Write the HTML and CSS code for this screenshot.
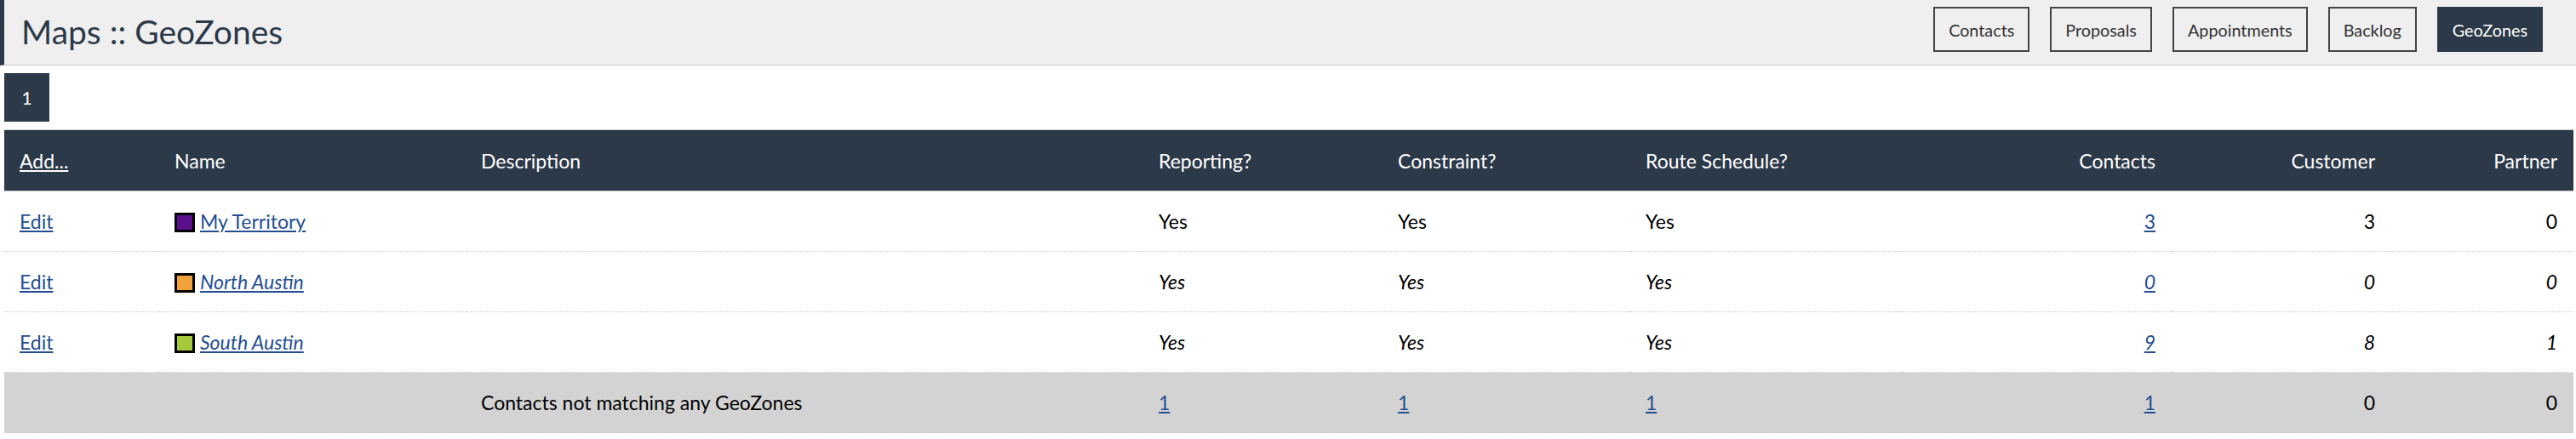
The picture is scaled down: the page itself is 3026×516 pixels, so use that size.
FILE: index.html
```html
<!DOCTYPE html>
<html lang="en">
<head>
<meta charset="utf-8">
<title>Maps :: GeoZones</title>
<link rel="stylesheet" href="styles.css">
</head>
<body>
<header class="topbar">
  <h1 class="title">Maps :: GeoZones</h1>
  <nav class="nav">
    <a class="nav-btn" href="#">Contacts</a>
    <a class="nav-btn" href="#">Proposals</a>
    <a class="nav-btn" href="#">Appointments</a>
    <a class="nav-btn" href="#">Backlog</a>
    <a class="nav-btn active" href="#">GeoZones</a>
  </nav>
</header>
<main class="content">
  <div class="pager"><span class="page">1</span></div>
  <table class="grid">
    <colgroup>
      <col class="c-edit"><col class="c-name"><col class="c-desc"><col class="c-rep"><col class="c-con"><col class="c-route"><col class="c-contacts"><col class="c-cust"><col class="c-part">
    </colgroup>
    <thead>
      <tr>
        <th><a href="#" class="head-link">Add...</a></th>
        <th>Name</th>
        <th>Description</th>
        <th>Reporting?</th>
        <th>Constraint?</th>
        <th>Route Schedule?</th>
        <th class="num">Contacts</th>
        <th class="num">Customer</th>
        <th class="num">Partner</th>
      </tr>
    </thead>
    <tbody>
      <tr>
        <td><a href="#">Edit</a></td>
        <td><span class="swatch purple"></span><a href="#">My Territory</a></td>
        <td></td>
        <td>Yes</td>
        <td>Yes</td>
        <td>Yes</td>
        <td class="num"><a href="#">3</a></td>
        <td class="num">3</td>
        <td class="num">0</td>
      </tr>
      <tr class="inactive">
        <td><a href="#" class="plain">Edit</a></td>
        <td><span class="swatch orange"></span><a href="#">North Austin</a></td>
        <td></td>
        <td>Yes</td>
        <td>Yes</td>
        <td>Yes</td>
        <td class="num"><a href="#">0</a></td>
        <td class="num">0</td>
        <td class="num">0</td>
      </tr>
      <tr class="inactive">
        <td><a href="#" class="plain">Edit</a></td>
        <td><span class="swatch green"></span><a href="#">South Austin</a></td>
        <td></td>
        <td>Yes</td>
        <td>Yes</td>
        <td>Yes</td>
        <td class="num"><a href="#">9</a></td>
        <td class="num">8</td>
        <td class="num">1</td>
      </tr>
      <tr class="summary">
        <td></td>
        <td></td>
        <td>Contacts not matching any GeoZones</td>
        <td><a href="#">1</a></td>
        <td><a href="#">1</a></td>
        <td><a href="#">1</a></td>
        <td class="num"><a href="#">1</a></td>
        <td class="num">0</td>
        <td class="num">0</td>
      </tr>
    </tbody>
  </table>
</main>
</body>
</html>
```
FILE: styles.css
```css
* { box-sizing: border-box; }
html, body { margin: 0; padding: 0; background: #fff; }
body {
  font-family: Lato, "Noto Sans", sans-serif;
  color: #000;
  width: 3026px;
}
.topbar {
  height: 77px;
  background: #efefef;
  border-left: 5px solid #2c3949;
  border-bottom: 1px solid #c8c8c8;
  display: flex;
  justify-content: space-between;
  align-items: flex-start;
  padding: 0 39px 0 20px;
}
.title {
  margin: 0;
  font-weight: 400;
  font-size: 39px;
  line-height: 75px;
  color: #2c3949;
}
.nav {
  display: flex;
  gap: 24px;
  padding-top: 8px;
}
.nav-btn {
  display: flex;
  align-items: center;
  height: 53px;
  padding: 0 16px;
  border: 2px solid #444;
  color: #333;
  text-decoration: none;
  font-size: 19.8px;
}
.nav-btn.active {
  background: #2c3949;
  border-color: #2c3949;
  color: #fff;
}
.content {
  padding: 9px 3px 0 5px;
}
.pager {
  display: flex;
  margin-bottom: 9px;
}
.page {
  width: 53px;
  height: 57px;
  background: #2c3949;
  color: #fff;
  font-size: 21px;
  display: flex;
  align-items: center;
  justify-content: center;
}
.grid {
  width: 3018px;
  border-collapse: collapse;
  table-layout: fixed;
  font-size: 23px;
}
.c-edit { width: 182px; }
.c-name { width: 360px; }
.c-desc { width: 796px; }
.c-rep { width: 281px; }
.c-con { width: 291px; }
.c-route { width: 318px; }
.c-contacts { width: 318px; }
.c-cust { width: 258px; }
.c-part { width: 214px; }
.grid th {
  background: #2c3949;
  color: #fff;
  font-weight: 400;
  text-align: left;
  height: 72px;
  padding: 0 19px 0 18px;
  border-top: 1px solid #c8c8c8;
  border-bottom: 1px solid #c8c8c8;
}
.grid td {
  height: 71px;
  padding: 0 19px 0 18px;
  border-bottom: 1px dotted #c8c8c8;
  white-space: nowrap;
}
.grid .num { text-align: right; }
.grid a { color: #234e93; }
.grid .head-link { color: #fff; }
.inactive td { font-style: italic; }
.inactive .plain { font-style: normal; }
.summary td { background: #d3d3d3; }
.swatch {
  display: inline-block;
  width: 24px;
  height: 23px;
  border: 3px solid #000;
  margin-right: 6px;
  vertical-align: -4px;
}
.swatch.purple { background: #5c0f8c; }
.swatch.orange { background: #f1a03c; }
.swatch.green { background: #a4c93b; }
```
